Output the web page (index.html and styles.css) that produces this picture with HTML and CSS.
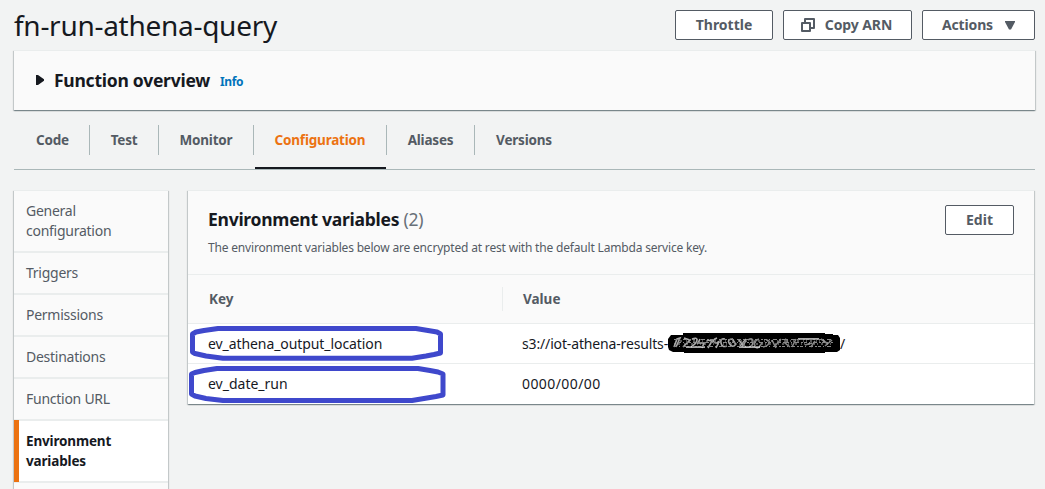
FILE: index.html
```html
<!DOCTYPE html>
<html lang="en">
<head>
<meta charset="utf-8">
<title>fn-run-athena-query</title>
<link rel="stylesheet" href="styles.css">
</head>
<body>
<header class="page-header">
  <h1 class="page-title"><span>fn-run-athena-query</span></h1>
  <div class="actions">
    <button class="btn btn-throttle"><span>Throttle</span></button>
    <button class="btn btn-copy"><svg class="copy-icon" width="14" height="14" viewBox="0 0 14 14"><path d="M1 5H9V13H1ZM4 5V1H13V10H9" fill="none" stroke="currentColor" stroke-width="2" stroke-linejoin="round"/></svg><span>Copy ARN</span></button>
    <button class="btn btn-actions"><span>Actions</span><svg class="caret" width="10" height="9" viewBox="0 0 10 9"><path d="M0 0H10V1L6 8.5H4L0 1Z" fill="currentColor"/></svg></button>
  </div>
</header>
<section class="panel overview">
  <svg class="expand" width="8" height="10" viewBox="0 0 8 10"><path d="M0 0H2L8 4.2V5.8L2 10H0Z" fill="currentColor"/></svg>
  <h2 class="overview-title"><span>Function overview</span></h2>
  <a class="info"><span>Info</span></a>
</section>
<nav class="tabs">
  <a class="tab tab-code"><span>Code</span></a>
  <a class="tab tab-test"><span>Test</span></a>
  <a class="tab tab-monitor"><span>Monitor</span></a>
  <a class="tab tab-config active"><span>Configuration</span></a>
  <a class="tab tab-aliases"><span>Aliases</span></a>
  <a class="tab tab-versions"><span>Versions</span></a>
</nav>
<div class="content">
  <nav class="panel side">
    <a class="side-item"><span>General<br>configuration</span></a>
    <a class="side-item"><span>Triggers</span></a>
    <a class="side-item"><span>Permissions</span></a>
    <a class="side-item"><span>Destinations</span></a>
    <a class="side-item"><span>Function URL</span></a>
    <a class="side-item selected"><span>Environment<br>variables</span></a>
  </nav>
  <main class="panel variables">
    <div class="variables-header">
      <div>
        <h2 class="variables-title"><span>Environment variables</span> <span class="count">(2)</span></h2>
        <p class="description"><span>The environment variables below are encrypted at rest with the default Lambda service key.</span></p>
      </div>
      <button class="btn btn-edit"><span>Edit</span></button>
    </div>
    <div class="row row-head"><div class="key"><span>Key</span></div><div class="value"><span>Value</span></div></div>
    <div class="row">
      <div class="key"><span class="key-one">ev_athena_output_location</span>
        <svg class="marker" width="253" height="36" viewBox="0 0 253 36"><path d="M28 2.5H226L238 4.5L247 6L250.5 8V27L244 28.5L236 30L222 32.2H33L16 30L5 27.5L2.5 26V8L6 6L14 4.5Z"/></svg>
      </div>
      <div class="value"><span class="bucket">s3://iot-athena-results-</span><svg class="redaction" width="172" height="22" viewBox="0 0 172 22"><path d="M15 0H157V1H165V2H170L172 5V17L169 19H157V20H16V19H5L1 17L0 14V6L3 2H15Z" fill="#000"/><g fill="none" class="scribble"><path d="M6 14l3-8 3-1-4 9M16 5l6 2-7 7M24 6q5-2 5 1t-6 7M32 6l-2 4h6l-2 5M39 7l5 1-4 7M49 5q-5 2-3 4t4 0-2 6M57 6q-5-1-4 4t6 3M65 6q-6 0-4 4t5 3-1-6M71 7l5 7M78 6l-6 7" stroke="#aaa" stroke-width="1.6"/><path d="M80 7q5-3 5 2t-6 5-1-6M91 6q-6 2-4 7t7-3M98 7q4 0 3 3t-6 4M104 7l4 8M113 6l-6 7M117 6q5 2 0 4l5 4M128 6l-4 8M137 12l7-2M147 8l-4 6M153 6l7 5M157 13l7-6" stroke="#858585" stroke-width="1.6"/><path d="M18 14H37M71 14H92M130 6H151" stroke="#e0e0e0" stroke-width="1.5"/><path d="M6 6.5H163M10 9.5H165M6 13.5H163" stroke="#888" stroke-dasharray="3 2 1 3 4 2 2 1"/><path d="M8 8H163M6 11H163" stroke="#aaa" stroke-dasharray="1 3 2 4 1 2"/></g></svg><span>/</span></div>
    </div>
    <div class="row row-last">
      <div class="key"><span class="key-two">ev_date_run</span>
        <svg class="marker marker-two" width="257" height="38" viewBox="0 0 257 38"><path d="M28 2.5H229L241 4.5L249 6L254 8V29L247 30.5L238 32L223 34.5H34L17 32.5L6 30L2.5 28V8L6 6.5L15 4.5Z"/></svg>
      </div>
      <div class="value"><span class="date">0000/00/00</span></div>
    </div>
  </main>
</div>
</body>
</html>
```
FILE: styles.css
```css
* { box-sizing: border-box; }
body { margin: 0; height: 489px; overflow: hidden; background: #f2f3f3; color: #16191f; font: 14px/20px "Noto Sans", sans-serif; }
h1, h2, p { margin: 0; }
.page-header { display: flex; justify-content: space-between; align-items: flex-start; height: 50px; padding: 10px 10px 0 14px; }
.page-title { font-size: 28px; font-weight: 400; line-height: 30px; letter-spacing: -.28px; }
.actions { display: flex; gap: 10px; }
.btn { display: flex; align-items: center; justify-content: center; height: 30px; padding: 0; border: 1px solid #545b64; border-radius: 2px; background: #fff; color: #545b64; font: 700 14px/20px "Noto Sans", sans-serif; }
.btn-throttle { width: 98px; }
.btn-copy { width: 129px; gap: 10px; letter-spacing: -.1px; }
.btn-copy svg { margin-left: -2px; }
.btn-actions { width: 113px; gap: 12px; letter-spacing: -.15px; }
.btn-edit { width: 69px; }
.panel { background: #fafafa; box-shadow: 0 1px 1px rgba(0,28,36,.3), 1px 1px 1px rgba(0,28,36,.15), -1px 1px 1px rgba(0,28,36,.15); border-top: 1px solid #eaeded; }
.overview { display: flex; align-items: center; height: 60px; margin: 0 10px 0 14px; padding: 0 0 1px 22px; }
.overview-title { margin-left: 10px; font-size: 17.5px; line-height: 22px; letter-spacing: -.25px; }
.info { margin: 4px 0 0 10px; color: #0073bb; font-size: 12px; font-weight: 700; line-height: 18px; letter-spacing: -.4px; }
.tabs { display: flex; height: 60px; margin: 0 10px 0 14px; padding-top: 15px; border-bottom: 1px solid #aab7b8; }
.tab { position: relative; display: flex; justify-content: center; height: 30px; align-items: center; border-right: 1px solid #aab7b8; color: #545b64; font-size: 13.5px; font-weight: 700; letter-spacing: -.2px; }
.tab-code { width: 76px; padding-left: 2px; }
.tab-test { width: 69px; }
.tab-monitor { width: 95px; }
.tab-config { width: 133px; }
.tab-aliases { width: 88px; }
.tab-versions { width: 98px; border-right: 0; }
.active { color: #ec7211; }
.active::after { content: ""; position: absolute; left: 1px; right: 0; bottom: -14px; height: 2px; background: #16191f; }
.content { display: flex; gap: 20px; padding: 20px 11px 0 14px; }
.side { width: 154px; height: 299px; }
.side-item { display: block; min-height: 42px; padding: 10px 12px; border-bottom: 2px solid #eaeded; color: #545b64; letter-spacing: -.26px; }
.side-item:first-child { height: 62px; }
.selected { position: relative; background: #fff; color: #16191f; font-size: 13.5px; font-weight: 700; letter-spacing: -.16px; }
.selected::before { content: ""; position: absolute; left: 0; top: -1px; width: 5px; height: 62px; background: #ec7211; }
.variables { flex: 1; height: 214px; }
.variables-header { display: flex; justify-content: space-between; height: 84px; padding: 14px 20px 0; border-bottom: 1px solid #eaeded; }
.variables-title { margin-top: 3px; font-size: 17.5px; line-height: 22px; letter-spacing: -.26px; }
.count { color: #687078; font-weight: 400; }
.description { margin-top: 9px; color: #545b64; font-size: 12px; line-height: 18px; letter-spacing: -.18px; }
.row { display: grid; grid-template-columns: 315px 1fr; height: 40px; align-items: center; border-bottom: 1px solid #eaeded; background: #fff; }
.row-head { height: 49px; background: #fafafa; color: #545b64; font-size: 13.5px; font-weight: 700; }
.key { position: relative; padding-left: 20px; }
.value { display: flex; align-items: center; padding-left: 19px; }
.row-head .key { padding-left: 21px; height: 24px; line-height: 24px; border-right: 1px solid #eaeded; }
.row-head .value { padding-left: 20px; }
.row-last { border-bottom: 0; }
.key-one { letter-spacing: -.08px; }
.bucket { letter-spacing: -.15px; }
.date { letter-spacing: .42px; }
.scribble { filter: blur(.35px); }
.marker { position: absolute; left: 2px; top: -8px; fill: none; stroke: #3f48cc; stroke-width: 5; stroke-linejoin: round; }
.marker-two { left: 1px; top: -8px; }
```
